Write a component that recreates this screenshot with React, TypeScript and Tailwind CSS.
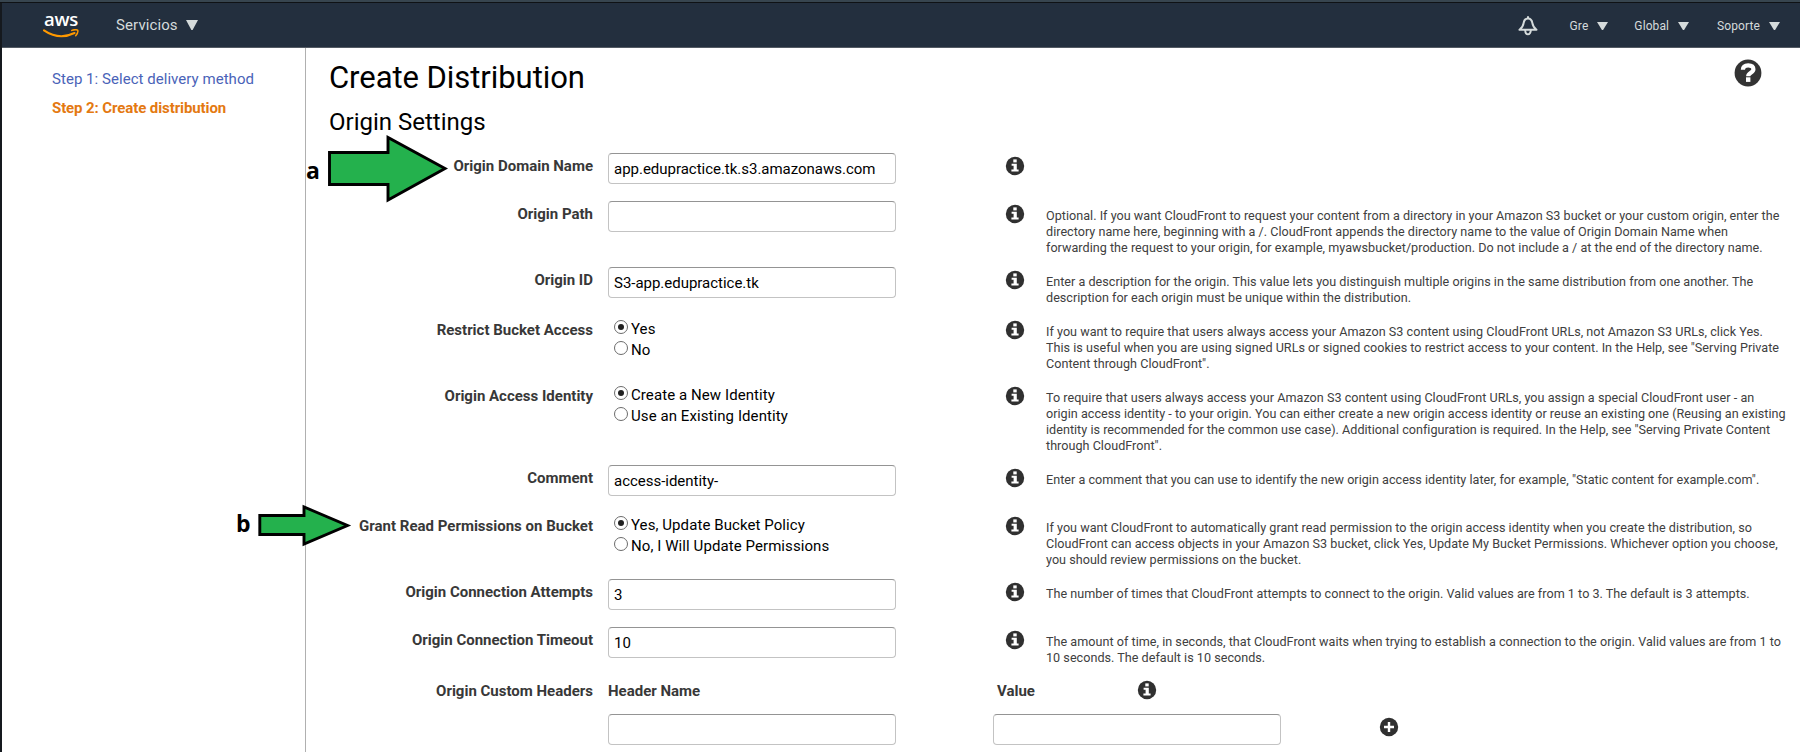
import React from "react";

function InfoIcon() {
  return (
    <svg width="20" height="20" viewBox="0 0 20 20" className="shrink-0">
      <circle cx="10" cy="10" r="9.2" fill="#303030" />
      <rect x="8.3" y="3.4" width="3.4" height="3" fill="#fff" />
      <path d="M6.6 7.8h5.2v5.7h1.8v2H6.4v-2h2.2V9.8h-2z" fill="#fff" />
    </svg>
  );
}

function PlusIcon() {
  return (
    <svg width="20" height="20" viewBox="0 0 20 20" className="shrink-0">
      <circle cx="10" cy="10" r="9.2" fill="#303030" />
      <path d="M8.8 5h2.4v3.8H15v2.4h-3.8V15H8.8v-3.8H5V8.8h3.8z" fill="#fff" />
    </svg>
  );
}

function HelpIcon() {
  return (
    <svg width="28" height="28" viewBox="0 0 28 28">
      <circle cx="14" cy="14" r="13.4" fill="#333" />
      <path
        d="M8.9 10.8C9 7.5 11.2 6.300 14.2 6.300c3.200 0 5.200 1.500 5.200 3.900 0 3.600-5.200 3.300-5.200 7.000"
        fill="none"
        stroke="#fff"
        strokeWidth="4.200"
      />
      <rect x="12" y="18.300" width="4.400" height="4.600" fill="#fff" />
    </svg>
  );
}

function Bell() {
  return (
    <svg width="20" height="20" viewBox="0 0 20 20" fill="none" stroke="#d5dbdb" strokeWidth="2">
      <path
        d="M10 2.500C7.200 2.500 6 4.600 5.600 7.200 5.200 10 4.200 11.900 1.500 13.800h17C15.800 11.900 14.800 10 14.400 7.200 14 4.600 12.800 2.500 10 2.500z"
        strokeLinejoin="round"
      />
      <path d="M10 0.300v2M7.200 14c0 5.800 5.600 5.800 5.600 0" />
    </svg>
  );
}

function Caret({ size }: { size: "lg" | "sm" }) {
  return (
    <svg
      width={size === "lg" ? 12 : 11}
      height={size === "lg" ? 10 : 8}
      viewBox="0 0 12 10"
      preserveAspectRatio="none"
    >
      <path d="M0 0h12L6.600 10H5.400z" fill="#d5dbdb" />
    </svg>
  );
}

function TextBox({ value }: { value?: string }) {
  return (
    <input
      type="text"
      defaultValue={value}
      className="block h-[31px] w-[288px] rounded-[4px] border border-[#c3c3c3] border-t-[#949494] bg-white px-[5px] pt-px text-[15px] tracking-[-0.02px] text-black outline-none"
    />
  );
}

function Radio({ label, checked }: { label: string; checked?: boolean }) {
  return (
    <label className="flex h-[21px] items-center text-[15px] leading-[21px] tracking-[0.08px] text-black">
      <span className="mb-[5px] ml-[6px] mr-[3px] flex size-[14px] items-center justify-center rounded-full border-[1.500px] border-[#6c6c6c] bg-white">
        {checked && <span className="size-[6px] rounded-full bg-[#202020]" />}
      </span>
      {label}
    </label>
  );
}

type Field = {
  label: string;
  height: string;
  value?: string;
  options?: string[];
  help: string[];
};

const fields: Field[] = [
  { label: "Origin Domain Name", height: "h-[48px]", value: "app.edupractice.tk.s3.amazonaws.com", help: [] },
  {
    label: "Origin Path",
    height: "h-[66px]",
    value: "",
    help: [
      "Optional. If you want CloudFront to request your content from a directory in your Amazon S3 bucket or your custom origin, enter the",
      "directory name here, beginning with a /. CloudFront appends the directory name to the value of Origin Domain Name when",
      "forwarding the request to your origin, for example, myawsbucket/production. Do not include a / at the end of the directory name.",
    ],
  },
  {
    label: "Origin ID",
    height: "h-[50px]",
    value: "S3-app.edupractice.tk",
    help: [
      "Enter a description for the origin. This value lets you distinguish multiple origins in the same distribution from one another. The",
      "description for each origin must be unique within the distribution.",
    ],
  },
  {
    label: "Restrict Bucket Access",
    height: "h-[66px]",
    options: ["Yes", "No"],
    help: [
      "If you want to require that users always access your Amazon S3 content using CloudFront URLs, not Amazon S3 URLs, click Yes.",
      "This is useful when you are using signed URLs or signed cookies to restrict access to your content. In the Help, see \"Serving Private",
      "Content through CloudFront\".",
    ],
  },
  {
    label: "Origin Access Identity",
    height: "h-[82px]",
    options: ["Create a New Identity", "Use an Existing Identity"],
    help: [
      "To require that users always access your Amazon S3 content using CloudFront URLs, you assign a special CloudFront user - an",
      "origin access identity - to your origin. You can either create a new origin access identity or reuse an existing one (Reusing an existing",
      "identity is recommended for the common use case). Additional configuration is required. In the Help, see \"Serving Private Content",
      "through CloudFront\".",
    ],
  },
  {
    label: "Comment",
    height: "h-[48px]",
    value: "access-identity-",
    help: [
      "Enter a comment that you can use to identify the new origin access identity later, for example, \"Static content for example.com\".",
    ],
  },
  {
    label: "Grant Read Permissions on Bucket",
    height: "h-[66px]",
    options: ["Yes, Update Bucket Policy", "No, I Will Update Permissions"],
    help: [
      "If you want CloudFront to automatically grant read permission to the origin access identity when you create the distribution, so",
      "CloudFront can access objects in your Amazon S3 bucket, click Yes, Update My Bucket Permissions. Whichever option you choose,",
      "you should review permissions on the bucket.",
    ],
  },
  {
    label: "Origin Connection Attempts",
    height: "h-[48px]",
    value: "3",
    help: [
      "The number of times that CloudFront attempts to connect to the origin. Valid values are from 1 to 3. The default is 3 attempts.",
    ],
  },
  {
    label: "Origin Connection Timeout",
    height: "h-[51px]",
    value: "10",
    help: [
      "The amount of time, in seconds, that CloudFront waits when trying to establish a connection to the origin. Valid values are from 1 to",
      "10 seconds. The default is 10 seconds.",
    ],
  },
];

const labelClass = "w-[287px] shrink-0 pt-[3px] text-right text-[15px] font-bold leading-[20px] text-[#383838]";

function FieldRow({ field }: { field: Field }) {
  return (
    <div className={"flex " + field.height}>
      <div className={labelClass}>{field.label}</div>
      <div className="ml-[15px] w-[397px] shrink-0">
        {field.options ? (
          <div className="pt-[2px]">
            {field.options.map((o, i) => (
              <Radio key={o} label={o} checked={i === 0} />
            ))}
          </div>
        ) : (
          <TextBox value={field.value} />
        )}
      </div>
      <div className="w-[41px] shrink-0 pt-[2.500px]">
        <InfoIcon />
      </div>
      <div className="pt-[7px] text-[12.600px] leading-[16px] tracking-[0.024px] text-[#404040]">
        {field.help.map((line) => (
          <p key={line} className="whitespace-nowrap">
            {line}
          </p>
        ))}
      </div>
    </div>
  );
}

export default function App() {
  return (
    <div className="relative flex h-[752px] w-[1800px] flex-col overflow-hidden bg-white font-[Roboto,sans-serif]">
      <div className="h-[2px] shrink-0 bg-[#37454f]" />
      <div className="h-px shrink-0 bg-[#0f1215]" />
      <div className="flex min-h-0 flex-1">
        <div className="w-[2px] shrink-0 bg-[#15191e]" />
        <div className="flex min-w-0 flex-1 flex-col">
          <header className="flex h-[45px] shrink-0 items-center border-b border-[#545b64] bg-[#232f3e] text-[#d5dbdb]">
            <div className="ml-[41px] flex w-[36px] flex-col items-center">
              <span className="h-[16px] font-['Open_Sans',sans-serif] text-[18.500px] font-semibold leading-[11px] tracking-[-0.3px] text-white">
                aws
              </span>
              <svg width="36" height="9" viewBox="0 0 36 9" fill="none" stroke="#ff9900" strokeLinecap="round">
                <path d="M1 1.300Q16 11.600 31.500 4" strokeWidth="2.100" />
                <path d="M28.800 1.400C31.200 0.500 33.500 0.600 34.700 1.200 35.300 2.800 34.300 5 32.700 6.800" strokeWidth="1.500" />
              </svg>
            </div>
            <div className="ml-[37px] flex items-center gap-[8px] text-[15px] tracking-[0.1px]">
              Servicios <Caret size="lg" />
            </div>
            <div className="ml-auto flex items-center pr-[20px] pt-[2px] text-[12px] tracking-[0.1px]">
              <Bell />
              <span className="ml-[32px] mr-[9px]">Gre</span>
              <Caret size="sm" />
              <span className="ml-[26px] mr-[9px]">Global</span>
              <Caret size="sm" />
              <span className="ml-[28px] mr-[9px]">Soporte</span>
              <Caret size="sm" />
            </div>
          </header>
          <div className="flex min-h-0 flex-1">
            <nav className="w-[304px] shrink-0 border-r border-[#b0b0b0] pl-[50px] pt-[17px] text-[15px] leading-[29px]">
              <p className="tracking-[0.040px] text-[#4a63b8]">Step 1: Select delivery method</p>
              <p className="font-bold tracking-[-0.1px] text-[#e47911]">Step 2: Create distribution</p>
            </nav>
            <main className="flex min-w-0 flex-1 flex-col">
              <div className="flex h-[52px] shrink-0 justify-between pl-[23px] pr-[38px] pt-[11px]">
                <h1 className="pt-px text-[31px] leading-[36px] tracking-[-0.06px] text-black">Create Distribution</h1>
                <HelpIcon />
              </div>
              <h2 className="h-[53px] shrink-0 pl-[23px] pt-[7px] text-[24px] leading-[30px] text-black">
                Origin Settings
              </h2>
              {fields.map((f) => (
                <FieldRow key={f.label} field={f} />
              ))}
              <div className="flex h-[36px] shrink-0 text-[15px] font-bold leading-[20px] text-[#383838]">
                <div className={labelClass}>Origin Custom Headers</div>
                <div className="ml-[15px] w-[389px] pt-[3px]">Header Name</div>
                <div className="w-[140px] pt-[3px]">Value</div>
                <div className="pt-[2px]">
                  <InfoIcon />
                </div>
              </div>
              <div className="flex shrink-0 pl-[302px]">
                <TextBox />
                <div className="ml-[97px]">
                  <TextBox />
                </div>
                <div className="ml-[98px] pt-[2.500px]">
                  <PlusIcon />
                </div>
              </div>
            </main>
          </div>
        </div>
      </div>

      {/* Annotation overlays */}
      <span className="absolute left-[306px] top-[157px] font-['Open_Sans',sans-serif] text-[23px] font-bold leading-[26px] text-black">
        a
      </span>
      <svg className="absolute left-[326px] top-[132px]" width="124" height="74" viewBox="0 0 124 74">
        <path d="M3.500 20.500H62V5.500L119 36.500 62 68V52.500H3.500z" fill="#24b14d" stroke="#000" strokeWidth="2.900" />
      </svg>
      <span className="absolute left-[236px] top-[510px] font-['Open_Sans',sans-serif] text-[23px] font-bold leading-[26px] text-black">
        b
      </span>
      <svg className="absolute left-[256px] top-[502px]" width="96" height="48" viewBox="0 0 96 48">
        <path d="M3.800 13.500H48V5L91.500 23.500 48 42V32.500H3.800z" fill="#24b14d" stroke="#000" strokeWidth="2.900" />
      </svg>
    </div>
  );
}
